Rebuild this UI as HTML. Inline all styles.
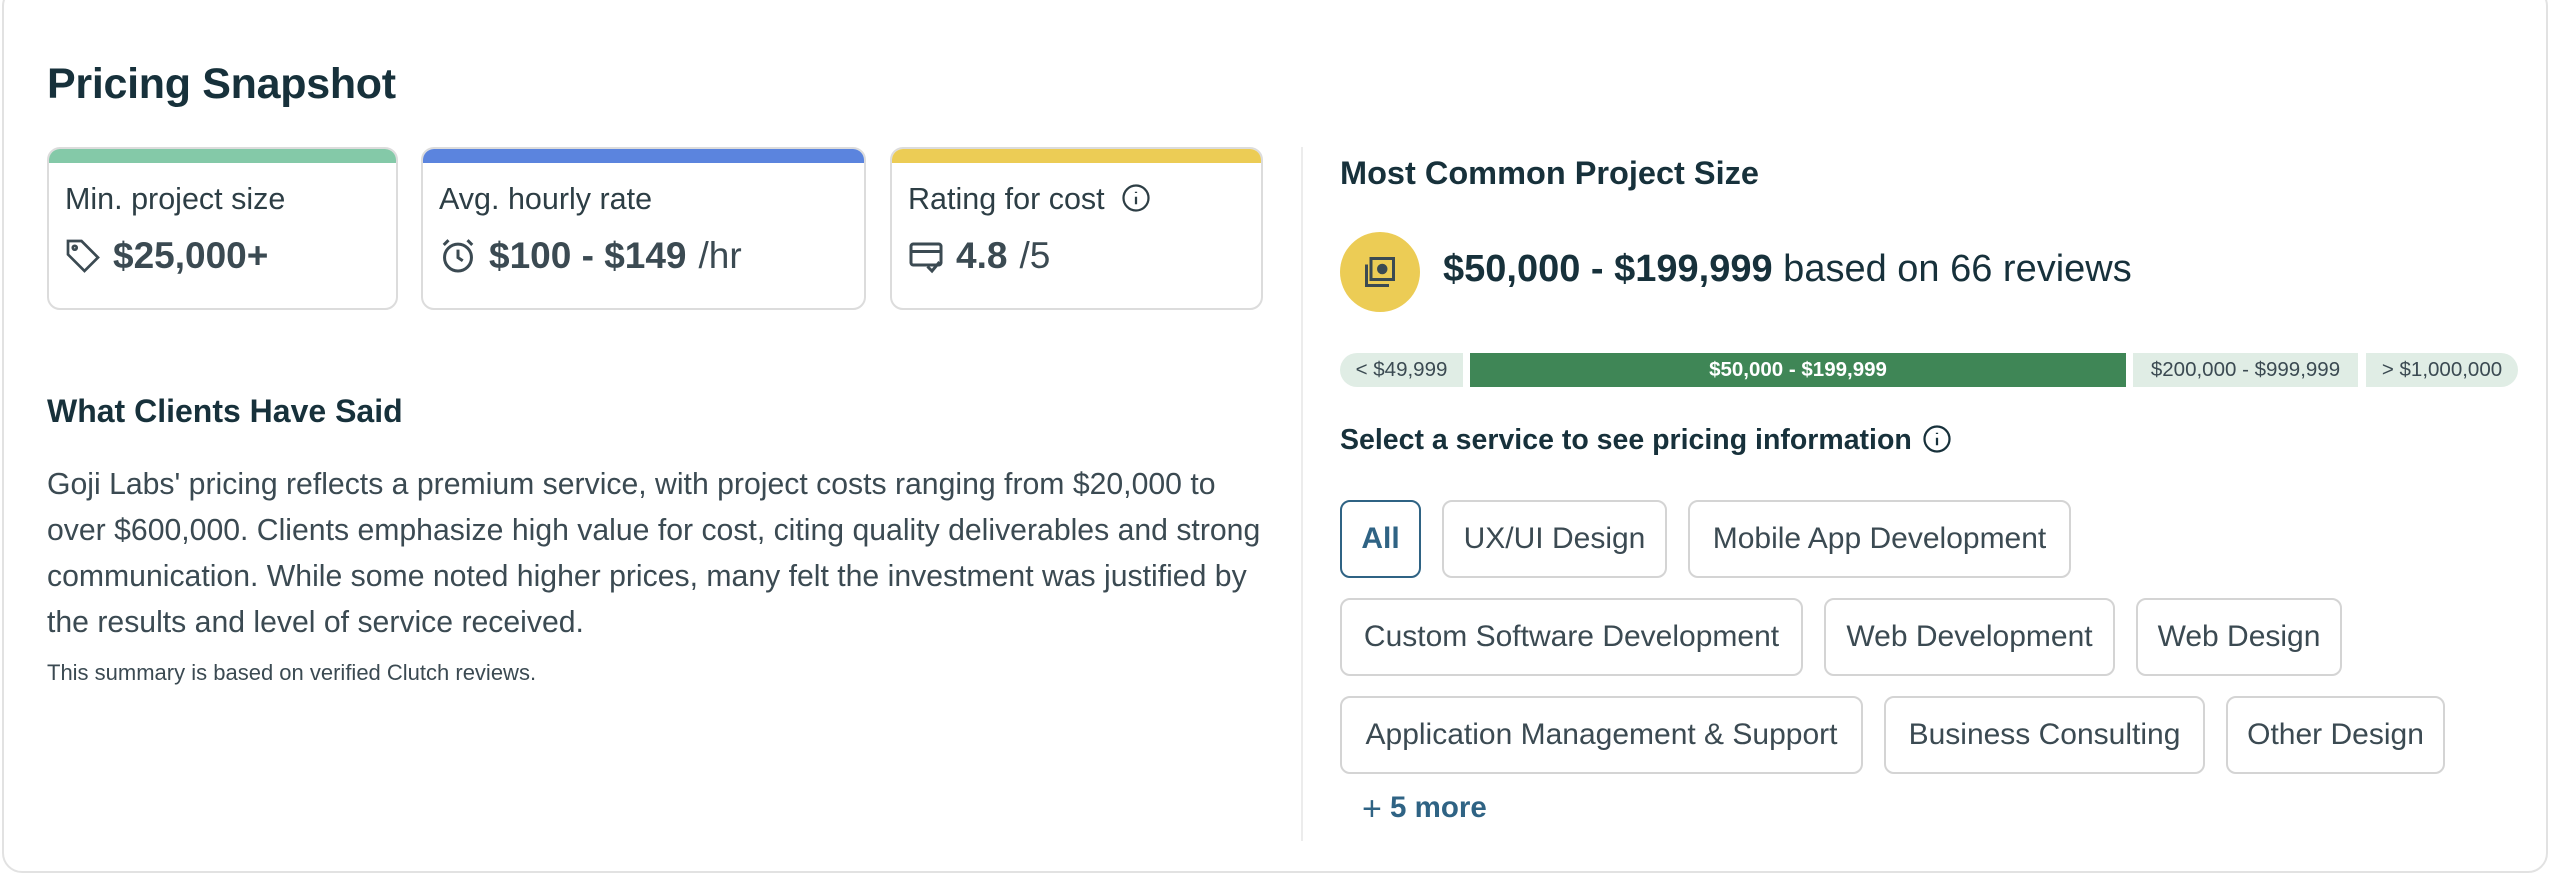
<!DOCTYPE html>
<html><head><meta charset="utf-8"><style>
*{margin:0;padding:0;box-sizing:border-box}
body{width:2560px;height:875px;background:#fff;font-family:"Liberation Sans",Arial,sans-serif;color:#17313b;position:relative;overflow:hidden}
.abs{position:absolute}
.card{position:absolute;left:2px;top:-14px;width:2546px;height:887px;border:2px solid #e2e2e2;border-radius:20px}
h1{position:absolute;left:47px;top:60px;font-size:43px;font-weight:700;color:#17313b;letter-spacing:-0.3px}
.stat{position:absolute;top:147px;height:163px;border:2px solid #dcdcdc;border-radius:13px;overflow:hidden}
.stat .bar{height:14px}
.stat .lab{position:absolute;left:16px;top:33px;font-size:30.5px;color:#2d3e45}
.stat .val{position:absolute;left:16px;top:86px;font-size:37px;font-weight:700;color:#3b4a52;display:flex;align-items:center;gap:12px}
.stat .val span.n{font-weight:400}
h2{position:absolute;font-size:32px;font-weight:700;color:#17313b}
.para{position:absolute;left:47px;top:462px;width:1260px;font-size:30.2px;line-height:46px;color:#3b4a52}
.small{position:absolute;left:47px;top:660px;font-size:22px;color:#3b4a52}
.div{position:absolute;left:1301px;top:147px;width:2px;height:694px;background:#ececec}
.seg{position:absolute;top:353px;height:34px;font-size:20.5px;line-height:34px;text-align:center;color:#3b4a52;background:#e0ede5}
.chip{position:absolute;height:78px;border:2px solid #d4d4d4;border-radius:10px;font-size:30px;line-height:74px;color:#3b4a52;text-align:center;white-space:nowrap}
</style></head><body>
<div class="card"></div>
<h1>Pricing Snapshot</h1>

<div class="stat" style="left:47px;width:351px"><div class="bar" style="background:#84c9a8"></div>
<div class="lab">Min. project size</div>
<div class="val"><svg width="36" height="40" viewBox="0 0 24 26" fill="none" stroke="#3b4a52" stroke-width="1.8"><path d="M2 3h9l11 11-9 9L2 12z"/><circle cx="6.5" cy="7.5" r="1.3"/></svg>$25,000+</div></div>

<div class="stat" style="left:421px;width:445px"><div class="bar" style="background:#5b84de"></div>
<div class="lab">Avg. hourly rate</div>
<div class="val"><svg width="38" height="38" viewBox="0 0 24 24" fill="none" stroke="#3b4a52" stroke-width="1.9"><circle cx="12" cy="13" r="8.5"/><path d="M12 8v5l3 2M3 5l3-3M21 5l-3-3"/></svg>$100 - $149 <span class="n">/hr</span></div></div>

<div class="stat" style="left:890px;width:373px"><div class="bar" style="background:#eccc55"></div>
<div class="lab">Rating for cost <svg style="vertical-align:-4px;margin-left:8px" width="30" height="30" viewBox="0 0 24 24" fill="none" stroke="#2d3e45" stroke-width="1.8"><circle cx="12" cy="12" r="10"/><path d="M12 11v6M12 7v1"/></svg></div>
<div class="val"><svg width="36" height="36" viewBox="0 0 24 24" fill="none" stroke="#3b4a52" stroke-width="2"><rect x="2" y="4" width="20" height="14" rx="1.5"/><path d="M2 9h20M13 19l3 3 5-6"/></svg>4.8 <span class="n">/5</span></div></div>

<h2 style="left:47px;top:393px">What Clients Have Said</h2>
<div class="para">Goji Labs' pricing reflects a premium service, with project costs ranging from $20,000 to<br>over $600,000. Clients emphasize high value for cost, citing quality deliverables and strong<br>communication. While some noted higher prices, many felt the investment was justified by<br>the results and level of service received.</div>
<div class="small">This summary is based on verified Clutch reviews.</div>

<div class="div"></div>

<h2 style="left:1340px;top:155px;font-size:32.5px">Most Common Project Size</h2>
<div class="abs" style="left:1340px;top:232px;width:80px;height:80px;border-radius:50%;background:#eccc55"></div>
<svg class="abs" style="left:1362px;top:254px" width="36" height="36" viewBox="0 0 24 24" fill="none" stroke="#3b4a52" stroke-width="2"><rect x="6" y="3" width="15" height="14"/><path d="M3 7v14h15"/><circle cx="13.5" cy="10" r="2.5" fill="#3b4a52"/></svg>
<div class="abs" style="left:1443px;top:248px;font-size:38px;color:#17313b"><b>$50,000 - $199,999</b> based on 66 reviews</div>

<div class="seg" style="left:1340px;width:123px;border-radius:17px 0 0 17px">&lt; $49,999</div>
<div class="seg" style="left:1470px;width:656px;background:#3f8656;color:#fff;font-weight:700">$50,000 - $199,999</div>
<div class="seg" style="left:2133px;width:225px">$200,000 - $999,999</div>
<div class="seg" style="left:2366px;width:152px;border-radius:0 17px 17px 0">&gt; $1,000,000</div>

<div class="abs" style="left:1340px;top:424px;font-size:28.5px;font-weight:700;color:#17313b">Select a service to see pricing information <svg style="vertical-align:-5px;margin-left:2px" width="30" height="30" viewBox="0 0 24 24" fill="none" stroke="#17313b" stroke-width="1.8"><circle cx="12" cy="12" r="10"/><path d="M12 11v6M12 7v1"/></svg></div>

<div class="chip" style="left:1340px;top:500px;width:81px;border-color:#2f6384;color:#2f6384;font-weight:700">All</div>
<div class="chip" style="left:1442px;top:500px;width:225px">UX/UI Design</div>
<div class="chip" style="left:1688px;top:500px;width:383px">Mobile App Development</div>
<div class="chip" style="left:1340px;top:598px;width:463px">Custom Software Development</div>
<div class="chip" style="left:1824px;top:598px;width:291px">Web Development</div>
<div class="chip" style="left:2136px;top:598px;width:206px">Web Design</div>
<div class="chip" style="left:1340px;top:696px;width:523px">Application Management &amp; Support</div>
<div class="chip" style="left:1884px;top:696px;width:321px">Business Consulting</div>
<div class="chip" style="left:2226px;top:696px;width:219px">Other Design</div>

<div class="abs" style="left:1362px;top:790px;font-size:29.5px;font-weight:700;color:#2f6384"><span style="font-weight:400;font-size:34px;vertical-align:-3px">+</span> 5 more</div>
</body></html>
